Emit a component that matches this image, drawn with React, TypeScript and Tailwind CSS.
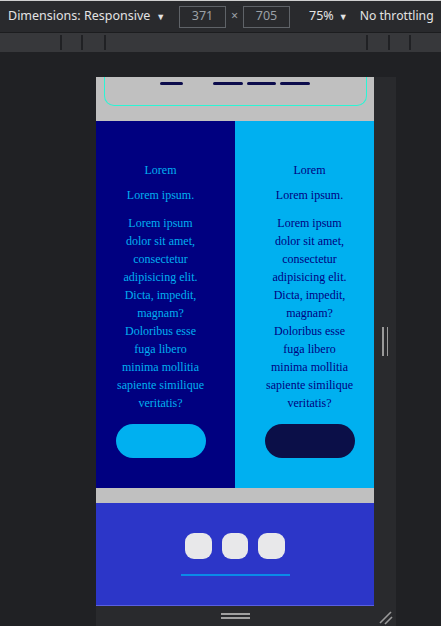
export default function App() {
  const para =
    "Lorem ipsum dolor sit amet, consectetur adipisicing elit. Dicta, impedit, magnam? Doloribus esse fuga libero minima mollitia sapiente similique veritatis?";
  return (
    <div className="w-[441px] h-[626px] bg-[#202124] overflow-hidden flex flex-col font-['Noto_Sans',sans-serif]">
      <div className="h-px bg-[#cfcfcf]" />
      <div className="h-[31px] bg-[#292a2d] flex items-center text-[#e3e3e3] text-[12.5px] whitespace-nowrap">
        <div className="w-[179px] pl-[8px] flex items-center">
          <span>Dimensions: Responsive</span>
          <span className="ml-[6px] text-[9px]">▼</span>
        </div>
        <div className="w-[47px] h-[22px] border border-[#5f6368] text-[#9aa0a6] flex items-center justify-center">371</div>
        <div className="w-[17px] text-center text-[#9aa0a6]">×</div>
        <div className="w-[47px] h-[22px] border border-[#5f6368] text-[#9aa0a6] flex items-center justify-center">705</div>
        <div className="ml-[19px] flex items-center">
          <span>75%</span>
          <span className="ml-[5px] text-[9px]">▼</span>
        </div>
        <div className="ml-[12px] text-[12.2px]">No throttling</div>
      </div>
      <div className="h-px bg-[#1c1d1f]" />
      <div className="h-[19px] bg-[#37383b] flex">
        <div className="w-[60px]" />
        <div className="w-[2px] my-[2px] bg-[#202124]" />
        <div className="w-[19px]" />
        <div className="w-[2px] my-[2px] bg-[#202124]" />
        <div className="w-[21px]" />
        <div className="w-[2px] my-[2px] bg-[#202124]" />
        <div className="w-[260px]" />
        <div className="w-[2px] my-[2px] bg-[#202124]" />
        <div className="w-[20px]" />
        <div className="w-[2px] my-[2px] bg-[#202124]" />
        <div className="w-[19px]" />
        <div className="w-[2px] my-[2px] bg-[#202124]" />
      </div>
      <div className="flex mt-[25px]">
        <div className="w-[96px]" />
        <div className="w-[300px] flex flex-col">
          <div className="flex">
            <div className="w-[278px] h-[529px] flex flex-col font-['Liberation_Serif',serif] text-[12px] leading-[18px]">
              <div className="h-[44px] bg-[#c0c0c0] overflow-hidden">
                <div className="ml-[8px] w-[263px] h-[29px] border border-t-0 border-[#2af5d5] rounded-b-[10px] flex items-start pt-[5px]">
                  <div className="ml-[55px] w-[23px] h-[3px] rounded-full bg-[#0c0c4c]" />
                  <div className="ml-[30px] w-[30px] h-[3px] rounded-full bg-[#0c0c4c]" />
                  <div className="ml-[4px] w-[29px] h-[3px] rounded-full bg-[#0c0c4c]" />
                  <div className="ml-[4px] w-[30px] h-[3px] rounded-full bg-[#0c0c4c]" />
                </div>
              </div>
              <div className="h-[367px] grid grid-cols-2">
                <div className="bg-[#000080] text-[#00b0f0] pr-[10px] pt-[40px] flex flex-col items-center text-center">
                  <div>Lorem</div>
                  <div className="mt-[7px]">Lorem ipsum.</div>
                  <p className="mt-[10px] w-[91px]">{para}</p>
                  <div className="mt-[12px] w-[90px] h-[34px] rounded-full bg-[#00b0f0]" />
                </div>
                <div className="bg-[#00b0f0] text-[#000080] pl-[10px] pt-[40px] flex flex-col items-center text-center">
                  <div>Lorem</div>
                  <div className="mt-[7px]">Lorem ipsum.</div>
                  <p className="mt-[10px] w-[91px]">{para}</p>
                  <div className="mt-[12px] w-[90px] h-[34px] rounded-full bg-[#0b0f48]" />
                </div>
              </div>
              <div className="h-[15px] bg-[#c0c0c0]" />
              <div className="h-[103px] bg-[#2c36c8] border-b border-[#5a60e0] flex flex-col items-center pt-[30px]">
                <div className="flex gap-[10px]">
                  <div className="w-[27px] h-[26px] rounded-[9px] bg-[#e8e8ea]" />
                  <div className="w-[26px] h-[26px] rounded-[9px] bg-[#e8e8ea]" />
                  <div className="w-[27px] h-[26px] rounded-[9px] bg-[#e8e8ea]" />
                </div>
                <div className="mt-[15px] w-[109px] h-[2px] bg-[#0b8ae8]" />
              </div>
            </div>
            <div className="w-[22px] bg-[#292a2d] flex items-center justify-center">
              <div className="flex gap-[3px] h-[29px]">
                <div className="w-[1.5px] bg-[#9a9a9a]" />
                <div className="w-[1.5px] bg-[#9a9a9a]" />
              </div>
            </div>
          </div>
          <div className="h-[20px] bg-[#292a2d] flex items-center relative">
            <div className="w-[278px] flex flex-col items-center gap-[2px]">
              <div className="w-[29px] h-[2px] bg-[#a0a0a0]" />
              <div className="w-[29px] h-[2px] bg-[#a0a0a0]" />
            </div>
            <svg className="absolute left-[282px] top-[3px]" width="16" height="16" viewBox="0 0 16 16">
              <line x1="2" y1="14" x2="13" y2="3" stroke="#9a9a9a" strokeWidth="1.6" />
              <line x1="7" y1="15" x2="14" y2="8" stroke="#9a9a9a" strokeWidth="1.6" />
            </svg>
          </div>
        </div>
      </div>
    </div>
  );
}
